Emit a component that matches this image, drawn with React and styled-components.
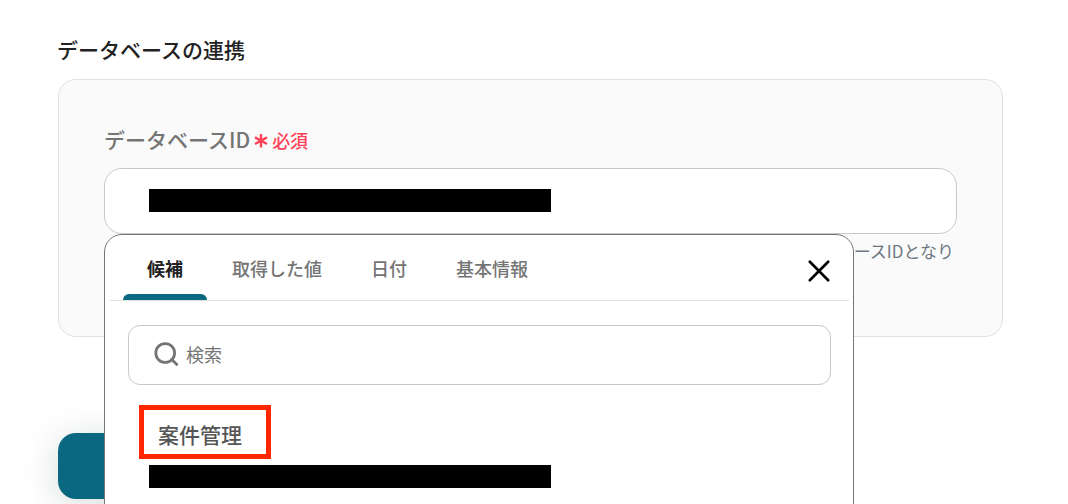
import React, { useState } from "react";
import styled, { createGlobalStyle } from "styled-components";

const GlobalStyle = createGlobalStyle`
  * { box-sizing: border-box; }
  body {
    margin: 0;
    background: #fff;
    color: #222;
    font-family: "Noto Sans CJK JP", "Noto Sans", sans-serif;
  }
  button, input { font: inherit; }
`;

const Page = styled.main`
  height: 100vh;
  overflow: hidden;
  padding: 33px 65px 0 57px;
`;

const Title = styled.h1`
  margin: 0 0 14px;
  font-size: 21px;
  line-height: 32px;
  font-weight: 500;
`;

const Card = styled.section`
  min-height: 258px;
  margin-left: 1px;
  padding: 43px 45px;
  border: 1px solid #e0e0e5;
  border-radius: 18px;
  background: #fafafa;
`;

const FieldHeader = styled.div`
  display: flex;
  align-items: center;
  gap: 4px;
  margin-bottom: 13px;
`;

const FieldLabel = styled.label`
  font-size: 21px;
  line-height: 32px;
  font-weight: 500;
  color: #757575;
`;

const Required = styled.span`
  display: flex;
  align-items: center;
  gap: 4px;
  padding-top: 2px;
  font-size: 18px;
  line-height: 30px;
  font-weight: 500;
  color: #ff4258;
`;

const FieldArea = styled.div`
  position: relative;
`;

const FieldBox = styled.div`
  display: flex;
  align-items: center;
  height: 66px;
  padding: 0 44px 2px;
  border: 1px solid #c8c8c8;
  border-radius: 18px;
  background: #fff;
`;

const TextInput = styled.input`
  flex: 1;
  min-width: 0;
  padding: 0;
  border: 0;
  outline: 0;
  background: transparent;
  font-size: 18px;
  color: #222;
  &::placeholder { color: #757575; opacity: 1; }
`;

const Mask = styled.span`
  display: block;
  width: 402px;
  height: 23px;
  background: #000;
`;

const Hint = styled.p`
  margin: 5px 3px 0;
  font-size: 17px;
  line-height: 24px;
  text-align: right;
  color: #6f7882;
`;

const Popover = styled.div`
  position: absolute;
  z-index: 2;
  top: 100%;
  left: 0;
  width: calc(100% - 103px);
  padding-bottom: 32px;
  border: 1px solid #757575;
  border-radius: 18px;
  background: #fff;
`;

const PopoverHeader = styled.div`
  display: flex;
  align-items: center;
  justify-content: space-between;
  height: 66px;
  margin: 0 4px 0 5px;
  padding: 0 14px 0 13px;
  border-bottom: 1px solid #e0e0e0;
`;

const TabList = styled.div`
  display: flex;
  align-self: stretch;
  gap: 1px;
`;

const Tab = styled.button`
  display: flex;
  flex-direction: column;
  justify-content: space-between;
  padding: 19px 0 0;
  border: 0;
  background: transparent;
  font-size: 18px;
  line-height: 28px;
  font-weight: ${(p) => (p.$active ? 700 : 500)};
  color: ${(p) => (p.$active ? "#222" : "#757575")};
  cursor: pointer;
  &::after {
    content: "";
    width: 100%;
    height: 6px;
    border-radius: 6px 6px 0 0;
    background: ${(p) => (p.$active ? "#0a6881" : "transparent")};
  }
`;

const TabText = styled.span`
  padding: 0 24px;
`;

const CloseButton = styled.button`
  display: flex;
  padding: 4px;
  margin-top: 6px;
  border: 0;
  background: transparent;
  color: #000;
  cursor: pointer;
`;

const SearchBox = styled.label`
  display: flex;
  align-items: center;
  gap: 7px;
  height: 60px;
  margin: 24px 22px 20px 23px;
  padding: 0 24px 2px;
  border: 1px solid #c8c8c8;
  border-radius: 12px;
  color: #757575;
`;

const Candidate = styled.div`
  display: flex;
  flex-direction: column;
  align-items: flex-start;
  gap: 6px;
  padding: 0 34px;
`;

const CandidateButton = styled.button`
  width: 132px;
  height: 54px;
  padding: 4px 14px 0;
  border: 5px solid #ff2600;
  background: #fff;
  font-size: 21px;
  line-height: 32px;
  font-weight: 500;
  text-align: left;
  color: #555;
  cursor: pointer;
`;

const CandidateValue = styled.div`
  padding-left: 10px;
`;

const SubmitButton = styled.button`
  width: 240px;
  height: 66px;
  margin: 96px 0 0 1px;
  border: 0;
  border-radius: 18px;
  background: #0a6881;
  box-shadow: 0 6px 36px rgba(0, 40, 40, 0.16);
  cursor: pointer;
`;

const AsteriskIcon = () => (
  <svg width="14" height="16" viewBox="0 0 14 16" fill="none" stroke="currentColor" strokeWidth="2.4" aria-hidden="true">
    <path d="M7 2v13.4M1 5.4l12 6.6M13 5.4L1 12" />
  </svg>
);

const CloseIcon = () => (
  <svg width="24" height="24" viewBox="0 0 24 24" fill="none" stroke="currentColor" strokeWidth="2.7" strokeLinecap="round" aria-hidden="true">
    <path d="M2.8 2.8l18.4 18.4M21.2 2.8L2.8 21.2" />
  </svg>
);

const SearchIcon = () => (
  <svg width="26" height="26" viewBox="0 0 26 26" fill="none" stroke="currentColor" strokeWidth="2.8" strokeLinecap="round" aria-hidden="true">
    <circle cx="12.2" cy="12" r="9.4" />
    <path d="M18.8 18.6l5 5" />
  </svg>
);

const tabs = ["候補", "取得した値", "日付", "基本情報"];

export default function App() {
  const [active, setActive] = useState(0);
  return (
    <Page>
      <GlobalStyle />
      <Title>データベースの連携</Title>
      <Card>
        <FieldHeader>
          <FieldLabel htmlFor="database-id">データベースID</FieldLabel>
          <Required>
            <AsteriskIcon />
            必須
          </Required>
        </FieldHeader>
        <FieldArea>
          <FieldBox>
            <Mask />
            <TextInput id="database-id" type="text" />
          </FieldBox>
          <Popover>
            <PopoverHeader>
              <TabList role="tablist">
                {tabs.map((name, i) => (
                  <Tab key={name} type="button" role="tab" aria-selected={i === active} $active={i === active} onClick={() => setActive(i)}>
                    <TabText>{name}</TabText>
                  </Tab>
                ))}
              </TabList>
              <CloseButton type="button" aria-label="閉じる">
                <CloseIcon />
              </CloseButton>
            </PopoverHeader>
            <SearchBox>
              <SearchIcon />
              <TextInput type="search" placeholder="検索" aria-label="検索" />
            </SearchBox>
            <Candidate>
              <CandidateButton type="button">案件管理</CandidateButton>
              <CandidateValue>
                <Mask />
              </CandidateValue>
            </Candidate>
          </Popover>
        </FieldArea>
        <Hint>データベースIDとなり</Hint>
      </Card>
      <SubmitButton type="button" aria-label="連携" />
    </Page>
  );
}
